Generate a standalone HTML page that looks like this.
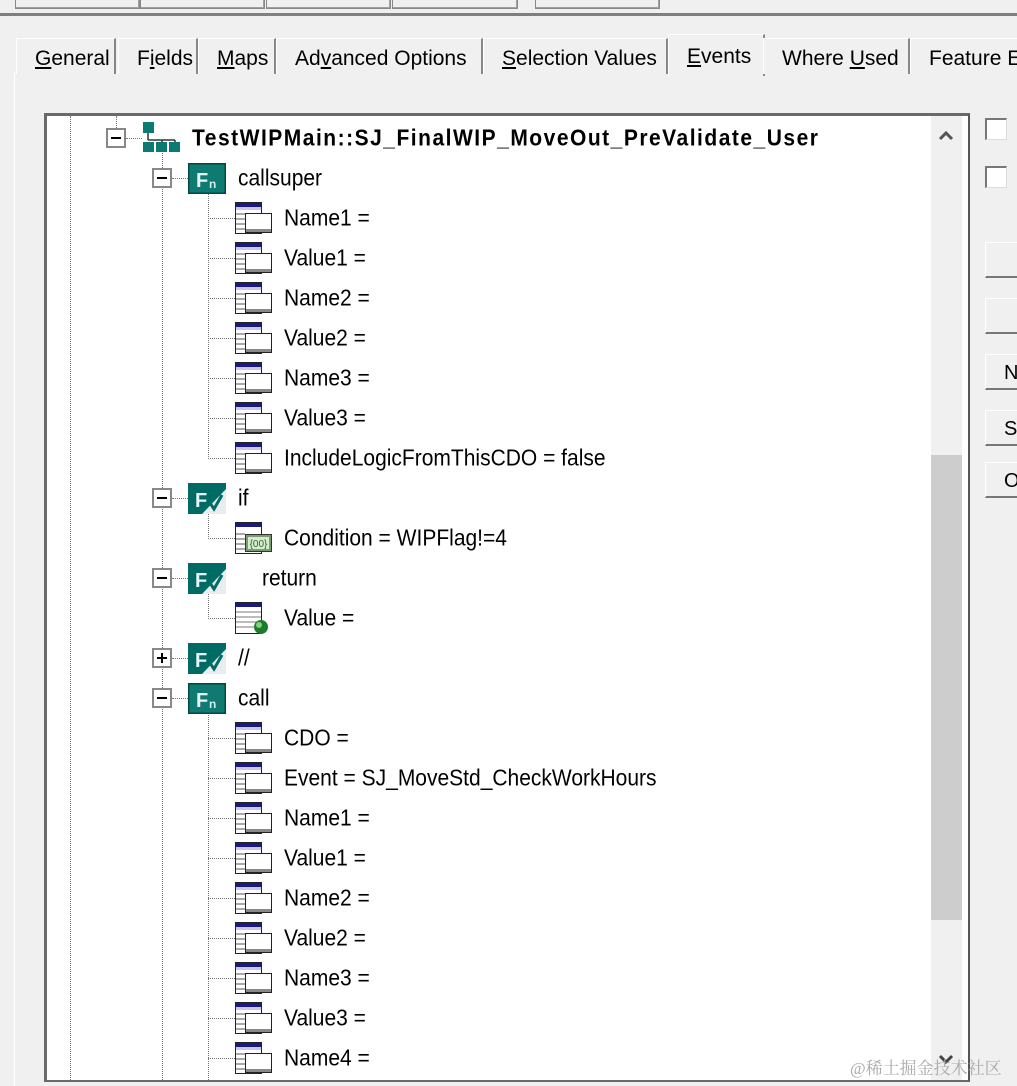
<!DOCTYPE html>
<html><head><meta charset="utf-8"><style>
body{margin:0;width:1017px;height:1085px;background:#f0f0f0;position:relative;overflow:hidden;font-family:"Liberation Sans",Tahoma,sans-serif;}
.a{position:absolute}
.btn{position:absolute;top:-10px;height:18px;border:1px solid #888;border-top:none;background:#f0f0f0;box-shadow:inset -1px -1px #a0a0a0}
.tab{position:absolute;top:38px;height:36px;border-left:1px solid #fff;border-top:1px solid #fff;border-right:2px solid #888;font-size:21px;line-height:40px;color:#000;padding:0 0 0 18px;box-sizing:border-box;background:#f0f0f0}
.t{position:absolute;font-size:21px;line-height:28px;height:28px;white-space:nowrap;color:#000;transform:scaleY(1.08)}
.bx{position:absolute;width:20px;height:20px;border:2px solid #888;background:#fff;box-sizing:border-box}
.bx:after{content:"";position:absolute;left:3px;top:7px;width:10px;height:2px;background:#000}
.pl:before{content:"";position:absolute;left:7px;top:3px;width:2px;height:10px;background:#000}
.vl{position:absolute;width:0;border-left:1px dotted #777}
.hl{position:absolute;height:0;border-top:1px dotted #777}
svg.i{position:absolute}
.rb{position:absolute;left:985px;width:40px;height:36px;border:1px solid #fff;border-right:none;border-bottom:2px solid #777;background:#f0f0f0;font-size:20px;line-height:36px;padding-left:18px;box-sizing:border-box}
.cb{position:absolute;left:985px;width:22px;height:22px;background:#fff;border-top:2px solid #777;border-left:2px solid #777;border-right:1px solid #ddd;border-bottom:1px solid #ddd;box-sizing:border-box}
</style></head><body>
<svg width="0" height="0" style="position:absolute"><defs>
<symbol id="prop" viewBox="0 0 37 32"><rect x="0.5" y="0.5" width="26" height="31" fill="#fff" stroke="#222"/><rect x="1" y="1" width="25" height="4" fill="#1a1a80"/><rect x="1" y="5" width="25" height="3" fill="#c8c8f0"/><g stroke="#555"><line x1="1" y1="12" x2="10" y2="12"/><line x1="1" y1="17" x2="10" y2="17"/><line x1="1" y1="22" x2="10" y2="22"/><line x1="1" y1="27" x2="10" y2="27"/></g><rect x="10.5" y="11.5" width="26" height="19" fill="#fff" stroke="#222"/><rect x="11" y="27" width="25" height="3" fill="#888"/></symbol>
<symbol id="cond" viewBox="0 0 37 32"><rect x="0.5" y="0.5" width="26" height="31" fill="#fff" stroke="#222"/><rect x="1" y="1" width="25" height="4" fill="#1a1a80"/><g stroke="#555"><line x1="1" y1="12" x2="10" y2="12"/><line x1="1" y1="17" x2="10" y2="17"/><line x1="1" y1="22" x2="10" y2="22"/><line x1="1" y1="27" x2="10" y2="27"/></g><rect x="10.5" y="12.5" width="26" height="17" fill="#7a9a70" stroke="#333"/><rect x="13" y="15" width="21" height="12" fill="#d8ecd0"/><text x="23.5" y="25" font-size="10" text-anchor="middle" fill="#2a6a2a" font-family="Liberation Sans">{00}</text></symbol>
<symbol id="val" viewBox="0 0 37 32"><rect x="0.5" y="0.5" width="26" height="31" fill="#fff" stroke="#222"/><rect x="1" y="1" width="25" height="4" fill="#1a1a80"/><g stroke="#777"><line x1="1" y1="10" x2="26" y2="10"/><line x1="1" y1="15" x2="26" y2="15"/><line x1="1" y1="20" x2="26" y2="20"/><line x1="1" y1="25" x2="26" y2="25"/></g><circle cx="26" cy="25" r="7" fill="#1f7a2a"/><circle cx="24" cy="23" r="3" fill="#7fd07f"/></symbol>
<symbol id="fn" viewBox="0 0 38 31"><rect x="0" y="0" width="38" height="31" fill="#004a46"/><rect x="1.5" y="1.5" width="35" height="28" fill="#0e7a72"/><text x="8" y="24" font-size="20" font-weight="bold" fill="#e8f4f4" font-family="Liberation Sans">F</text><text x="21" y="25" font-size="12" font-weight="bold" fill="#cfe8e8" font-family="Liberation Sans">n</text></symbol>
<symbol id="fv" viewBox="0 0 38 31"><rect x="0" y="0" width="38" height="31" fill="#006a64"/><polygon points="38,6 38,31 14,31" fill="#e8eef0"/><text x="7" y="24" font-size="20" font-weight="bold" fill="#e8f4f4" font-family="Liberation Sans">F</text><path d="M22 20 l4 6 l8 -14" stroke="#006a64" stroke-width="3" fill="none"/></symbol>
<symbol id="root" viewBox="0 0 38 30"><rect x="0" y="0" width="11" height="11" fill="#0a7a72"/><path d="M5 11 V18 M5 18 H32 M19 18V21 M32 18V21" stroke="#333" stroke-width="1.5"/><rect x="0" y="20" width="11" height="10" fill="#0a7a72"/><rect x="13" y="20" width="11" height="10" fill="#0a7a72"/><rect x="26" y="20" width="11" height="10" fill="#0a7a72"/></symbol>
</defs></svg>

<div class="btn" style="left:15px;width:123px"></div>
<div class="btn" style="left:140px;width:123px"></div>
<div class="btn" style="left:266px;width:123px"></div>
<div class="btn" style="left:392px;width:124px"></div>
<div class="btn" style="left:535px;width:123px"></div>
<div class="a" style="left:0;top:13px;width:1017px;height:3px;background:#808080"></div>

<div class="a" style="left:14px;top:73px;width:1010px;height:1012px;border-left:1px solid #fff;border-top:1px solid #fff"></div>
<div class="tab" style="left:16px;width:100px"><u>G</u>eneral</div>
<div class="tab" style="left:118px;width:80px">F<u>i</u>elds</div>
<div class="tab" style="left:198px;width:78px"><u>M</u>aps</div>
<div class="tab" style="left:276px;width:207px">Ad<u>v</u>anced Options</div>
<div class="tab" style="left:483px;width:185px"><u>S</u>election Values</div>
<div class="a" style="left:668px;top:34px;width:97px;height:42px;background:#f0f0f0;border-left:1px solid #fff;border-top:1px solid #fff;border-right:2px solid #888;box-sizing:border-box;font-size:21px;line-height:44px;padding-left:18px"><u>E</u>vents</div>
<div class="tab" style="left:763px;width:147px">Where <u>U</u>sed</div>
<div class="tab" style="left:910px;width:120px">Feature E</div>

<div class="cb" style="top:118px"></div>
<div class="cb" style="top:166px"></div>
<div class="rb" style="top:242px"></div>
<div class="rb" style="top:298px"></div>
<div class="rb" style="top:354px">N</div>
<div class="rb" style="top:410px">S</div>
<div class="rb" style="top:462px">O</div>

<div class="a" style="left:44px;top:113px;width:926px;height:969px;border:3px solid #6a6a6a;border-right-width:2px;border-bottom-width:2px;box-sizing:border-box;background:#fff;border-right-color:#555"></div>
<div class="a" style="left:931px;top:116px;width:31px;height:964px;background:#f0f0f0"></div>
<div class="a" style="left:931px;top:455px;width:31px;height:465px;background:#cdcdcd"></div>
<svg class="i" style="left:938px;top:131px" width="16" height="10"><path d="M2 8 L8 2 L14 8" stroke="#555" stroke-width="3" fill="none"/></svg>
<svg class="i" style="left:938px;top:1054px" width="16" height="10"><path d="M2 2 L8 8 L14 2" stroke="#444" stroke-width="3" fill="none"/></svg>

<div class="vl" style="left:70px;top:116px;height:964px"></div>
<div class="vl" style="left:116px;top:116px;height:12px"></div>
<div class="vl" style="left:162px;top:150px;height:930px"></div>
<div class="vl" style="left:208px;top:193px;height:266px"></div>
<div class="vl" style="left:208px;top:513px;height:26px"></div>
<div class="vl" style="left:208px;top:593px;height:26px"></div>
<div class="vl" style="left:208px;top:713px;height:367px"></div>

<div class="bx" style="left:106px;top:128px"></div>
<div class="hl" style="left:126px;top:138px;width:16px"></div>
<svg class="i" style="left:143px;top:122px" width="38" height="30"><use href="#root"/></svg>
<div class="t" style="left:192px;top:125px;font-weight:bold;letter-spacing:1.5px">TestWIPMain::SJ_FinalWIP_MoveOut_PreValidate_User</div>

<div class="bx" style="left:152px;top:168px"></div><div class="hl" style="left:172px;top:178px;width:16px"></div>
<svg class="i" style="left:188px;top:163px" width="38" height="31"><use href="#fn"/></svg><div class="t" style="left:238px;top:165px">callsuper</div>

<div class="bx" style="left:152px;top:488px"></div><div class="hl" style="left:172px;top:498px;width:16px"></div>
<svg class="i" style="left:188px;top:483px" width="38" height="31"><use href="#fv"/></svg><div class="t" style="left:238px;top:485px">if</div>

<div class="bx" style="left:152px;top:568px"></div><div class="hl" style="left:172px;top:578px;width:16px"></div>
<svg class="i" style="left:188px;top:563px" width="38" height="31"><use href="#fv"/></svg><div class="t" style="left:262px;top:565px">return</div>

<div class="bx pl" style="left:152px;top:648px"></div><div class="hl" style="left:172px;top:658px;width:16px"></div>
<svg class="i" style="left:188px;top:643px" width="38" height="31"><use href="#fv"/></svg><div class="t" style="left:238px;top:645px">//</div>

<div class="bx" style="left:152px;top:688px"></div><div class="hl" style="left:172px;top:698px;width:16px"></div>
<svg class="i" style="left:188px;top:683px" width="38" height="31"><use href="#fn"/></svg><div class="t" style="left:238px;top:685px">call</div>

<div class="hl" style="left:208px;top:218px;width:27px"></div><svg class="i" style="left:235px;top:202px" width="37" height="32"><use href="#prop"/></svg><div class="t" style="left:284px;top:205px">Name1 =</div>
<div class="hl" style="left:208px;top:258px;width:27px"></div><svg class="i" style="left:235px;top:242px" width="37" height="32"><use href="#prop"/></svg><div class="t" style="left:284px;top:245px">Value1 =</div>
<div class="hl" style="left:208px;top:298px;width:27px"></div><svg class="i" style="left:235px;top:282px" width="37" height="32"><use href="#prop"/></svg><div class="t" style="left:284px;top:285px">Name2 =</div>
<div class="hl" style="left:208px;top:338px;width:27px"></div><svg class="i" style="left:235px;top:322px" width="37" height="32"><use href="#prop"/></svg><div class="t" style="left:284px;top:325px">Value2 =</div>
<div class="hl" style="left:208px;top:378px;width:27px"></div><svg class="i" style="left:235px;top:362px" width="37" height="32"><use href="#prop"/></svg><div class="t" style="left:284px;top:365px">Name3 =</div>
<div class="hl" style="left:208px;top:418px;width:27px"></div><svg class="i" style="left:235px;top:402px" width="37" height="32"><use href="#prop"/></svg><div class="t" style="left:284px;top:405px">Value3 =</div>
<div class="hl" style="left:208px;top:458px;width:27px"></div><svg class="i" style="left:235px;top:442px" width="37" height="32"><use href="#prop"/></svg><div class="t" style="left:284px;top:445px">IncludeLogicFromThisCDO = false</div>

<div class="hl" style="left:208px;top:538px;width:27px"></div><svg class="i" style="left:235px;top:522px" width="37" height="32"><use href="#cond"/></svg><div class="t" style="left:284px;top:525px">Condition = WIPFlag!=4</div>
<div class="hl" style="left:208px;top:618px;width:27px"></div><svg class="i" style="left:235px;top:602px" width="37" height="32"><use href="#val"/></svg><div class="t" style="left:284px;top:605px">Value =</div>

<div class="hl" style="left:208px;top:738px;width:27px"></div><svg class="i" style="left:235px;top:722px" width="37" height="32"><use href="#prop"/></svg><div class="t" style="left:284px;top:725px">CDO =</div>
<div class="hl" style="left:208px;top:778px;width:27px"></div><svg class="i" style="left:235px;top:762px" width="37" height="32"><use href="#prop"/></svg><div class="t" style="left:284px;top:765px">Event = SJ_MoveStd_CheckWorkHours</div>
<div class="hl" style="left:208px;top:818px;width:27px"></div><svg class="i" style="left:235px;top:802px" width="37" height="32"><use href="#prop"/></svg><div class="t" style="left:284px;top:805px">Name1 =</div>
<div class="hl" style="left:208px;top:858px;width:27px"></div><svg class="i" style="left:235px;top:842px" width="37" height="32"><use href="#prop"/></svg><div class="t" style="left:284px;top:845px">Value1 =</div>
<div class="hl" style="left:208px;top:898px;width:27px"></div><svg class="i" style="left:235px;top:882px" width="37" height="32"><use href="#prop"/></svg><div class="t" style="left:284px;top:885px">Name2 =</div>
<div class="hl" style="left:208px;top:938px;width:27px"></div><svg class="i" style="left:235px;top:922px" width="37" height="32"><use href="#prop"/></svg><div class="t" style="left:284px;top:925px">Value2 =</div>
<div class="hl" style="left:208px;top:978px;width:27px"></div><svg class="i" style="left:235px;top:962px" width="37" height="32"><use href="#prop"/></svg><div class="t" style="left:284px;top:965px">Name3 =</div>
<div class="hl" style="left:208px;top:1018px;width:27px"></div><svg class="i" style="left:235px;top:1002px" width="37" height="32"><use href="#prop"/></svg><div class="t" style="left:284px;top:1005px">Value3 =</div>
<div class="hl" style="left:208px;top:1058px;width:27px"></div><svg class="i" style="left:235px;top:1042px" width="37" height="32"><use href="#prop"/></svg><div class="t" style="left:284px;top:1045px">Name4 =</div>

<div class="a" style="left:850px;top:1054px;font-size:17px;color:#aaa;font-family:'Liberation Serif','Noto Serif CJK SC',serif">@稀土掘金技术社区</div>
</body></html>
